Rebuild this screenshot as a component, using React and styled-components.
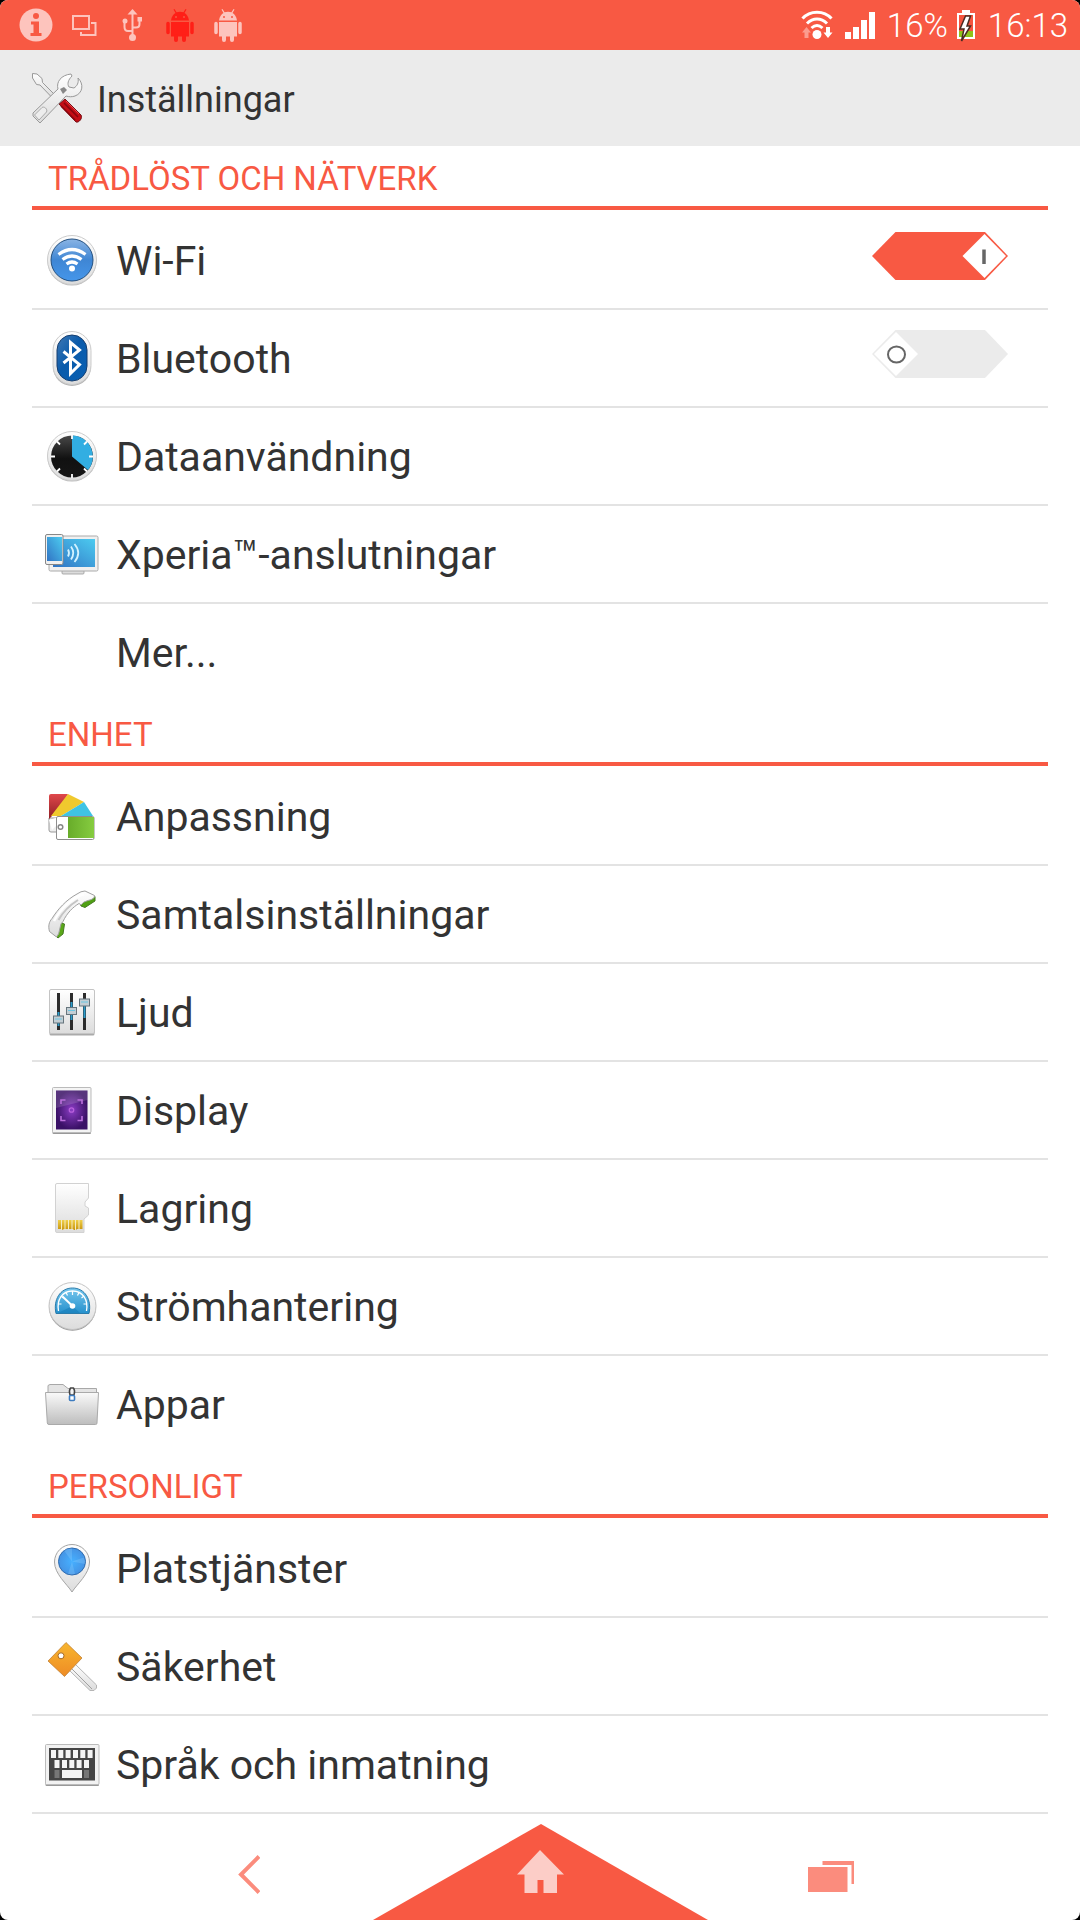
import React, { useState } from 'react';
import styled, { createGlobalStyle } from 'styled-components';

const accent = '#f85943';
const faded = '#fdc4bd';

const GlobalStyle = createGlobalStyle`
  * {
    box-sizing: border-box;
  }

  body {
    margin: 0;
    background: #000;
    color: #333;
    font-family: Roboto, 'Noto Sans', sans-serif;
  }
`;

/* Gradients shared by the row icons */
const Gradients = () => (
  <HiddenSvg aria-hidden="true">
    <defs>
      <linearGradient id="silver" x1="0" y1="0" x2="0" y2="1">
        <stop offset="0" stopColor="#fff" />
        <stop offset="1" stopColor="#dcdcdc" />
      </linearGradient>
      <linearGradient id="folder" x1="0" y1="0" x2="0" y2="1">
        <stop offset="0" stopColor="#fafafa" />
        <stop offset="1" stopColor="#bdbdbd" />
      </linearGradient>
      <linearGradient id="wifi" x1="0" y1="0" x2="0" y2="1">
        <stop offset="0" stopColor="#8ab4e4" />
        <stop offset="0.5" stopColor="#3f86d4" />
        <stop offset="1" stopColor="#4596ea" />
      </linearGradient>
      <linearGradient id="bluetooth" x1="0" y1="0" x2="1" y2="1">
        <stop offset="0" stopColor="#3f78b4" />
        <stop offset="0.45" stopColor="#0a5bab" />
        <stop offset="1" stopColor="#0961b4" />
      </linearGradient>
      <linearGradient id="screen" x1="1" y1="0" x2="0" y2="1">
        <stop offset="0" stopColor="#4ccbf0" />
        <stop offset="1" stopColor="#3174c4" />
      </linearGradient>
      <linearGradient id="dial" x1="0" y1="0" x2="0" y2="1">
        <stop offset="0" stopColor="#484848" />
        <stop offset="0.55" stopColor="#111" />
        <stop offset="1" stopColor="#161616" />
      </linearGradient>
      <linearGradient id="red" x1="0" y1="0" x2="0" y2="1">
        <stop offset="0" stopColor="#e0484b" />
        <stop offset="1" stopColor="#8f1e24" />
      </linearGradient>
      <linearGradient id="green" x1="0" y1="0" x2="1" y2="0">
        <stop offset="0" stopColor="#68ac2a" />
        <stop offset="1" stopColor="#86cc40" />
      </linearGradient>
      <radialGradient id="purple">
        <stop offset="0" stopColor="#8a3cc4" />
        <stop offset="1" stopColor="#3a1166" />
      </radialGradient>
      <linearGradient id="gold" x1="0" y1="0" x2="0" y2="1">
        <stop offset="0" stopColor="#f0d04a" />
        <stop offset="1" stopColor="#c8940c" />
      </linearGradient>
      <linearGradient id="gauge" x1="0" y1="0" x2="0" y2="1">
        <stop offset="0" stopColor="#78c8ee" />
        <stop offset="1" stopColor="#2590cc" />
      </linearGradient>
      <linearGradient id="key" x1="0" y1="0" x2="0" y2="1">
        <stop offset="0" stopColor="#f8b62e" />
        <stop offset="1" stopColor="#ee8b25" />
      </linearGradient>
      <radialGradient id="pin">
        <stop offset="0" stopColor="#46b0ff" />
        <stop offset="1" stopColor="#4593e4" />
      </radialGradient>
    </defs>
  </HiddenSvg>
);

const icons = {
  tools: (
    <g strokeLinejoin="round">
      <path d="M4.500 3.500L9 4L14 8.500L14.500 12.500L26 24L23.500 27L12 15L8.500 14.500L4.500 8Z" fill="url(#silver)" stroke="#999" />
      <path d="M31 34L37 29L53 45C55 48 51 53 48 52Z" fill="#c30d15" stroke="#76141a" />
      <path d="M36 33L50 47M33 36L47 50" stroke="#86070e" strokeWidth="1.500" />
      <path d="M38 31L51 44" stroke="#f0474b" />
      <path d="M5 43L30 19C28 12 33 5 43 4L44 6C40 10 39 14 41 17L46 18C49 16 51 13 50 8C56 14 55 23 47 26C44 27 41 27 38 26L12 53L5 46Z" fill="url(#silver)" stroke="#999" />
      <path d="M6.500 45L14 37.500C16 36 20 39 18.500 42L11 50Z" fill="#ededed" stroke="#aaa" />
      <path d="M32 19L36 17L39 20L35 24Z" fill="#888" />
    </g>
  ),
  wifi: (
    <g>
      <circle cx="28" cy="29" r="24.500" fill="#bbb" />
      <circle cx="28" cy="28" r="24.500" fill="url(#silver)" stroke="#ccc" />
      <circle cx="28" cy="28" r="21" fill="url(#wifi)" stroke="#24507f" />
      <path d="M14.500 22.500Q28 12.500 41.500 22.500M18.500 27.500Q28 20.500 37.500 27.500M22.500 32Q28 28 33.500 32" fill="none" stroke="#fff" strokeWidth="3.200" />
      <circle cx="28" cy="36.500" r="3" fill="#fff" />
    </g>
  ),
  bluetooth: (
    <g>
      <rect x="9" y="2" width="38" height="54" rx="19" fill="#b5b5b5" />
      <rect x="9" y="1.500" width="38" height="53" rx="19" fill="url(#silver)" stroke="#ccc" />
      <rect x="13" y="5" width="30" height="46" rx="15" fill="url(#bluetooth)" stroke="#173f70" />
      <path d="M19.500 21.500L35.500 34.500L26.500 43.500V12.500L35.500 20L19.500 33" fill="none" stroke="#fff" strokeWidth="3" />
    </g>
  ),
  data: (
    <g>
      <circle cx="28" cy="29" r="24.500" fill="#bbb" />
      <circle cx="28" cy="28" r="24.500" fill="url(#silver)" stroke="#ccc" />
      <circle cx="28" cy="28.500" r="21" fill="url(#dial)" />
      <path d="M28 28.500V7.500A21 21 0 0 1 44 42Z" fill="#32aee2" />
      <path d="M28 7V11M28 46V50M7 28.500H11M45 28.500H49M13 13.500L16 16.500M40 40.500L43 43.500M13 43.500L16 40.500M40 16.500L43 13.500" stroke="#fff" strokeWidth="1.800" />
    </g>
  ),
  xperia: (
    <g>
      <rect x="18" y="44" width="22" height="4" rx="1" fill="#ddd" stroke="#999" strokeWidth="0.800" />
      <rect x="5" y="10" width="49" height="35" rx="1.500" fill="#f0f0f0" stroke="#aaa" />
      <rect x="9" y="13" width="42" height="28" fill="url(#screen)" />
      <rect x="1.500" y="8.500" width="17.500" height="30" rx="1.500" fill="#f0f0f0" stroke="#888" />
      <rect x="3" y="11" width="15" height="24" fill="url(#screen)" />
      <path d="M24 23.500Q26 27 24 30.500M27 20.500Q31.500 27 27 33.500M30.500 18Q38 27 30.500 36" fill="none" stroke="#d2f2ff" strokeWidth="1.800" />
    </g>
  ),
  palette: (
    <g>
      <path d="M5 30V42Q5 44 7 44H13V30Z" fill="#eee" stroke="#999" />
      <path d="M5 31V8Q5 6 7 6H24L16 20Z" fill="url(#red)" />
      <path d="M24 6L40 14L17 28H7Z" fill="#f0c92e" />
      <path d="M40 14L49 28H17Z" fill="#3fc3e4" />
      <path d="M5 32L18 28V32L8 42Z" fill="#fff" />
      <rect x="12.500" y="28.500" width="37.500" height="23" rx="1.500" fill="#fff" stroke="#8e8e8e" />
      <rect x="24" y="29" width="26" height="21" fill="url(#green)" />
      <circle cx="16.500" cy="39" r="2.300" fill="#fff" stroke="#888" strokeWidth="1.500" />
    </g>
  ),
  phone: (
    <g strokeLinejoin="round">
      <path d="M36 17L51 10.500V15L41 21.500L37 20Z" fill="#4fa012" stroke="#467a23" />
      <path d="M16 36.500L20.500 38L19 48L14 52L12 50Z" fill="#5aa818" stroke="#467a23" />
      <path d="M41 5L50.500 9.500Q51 13 44 14.500Q39 15.500 37 19L35 17.500C29 21 23 27 19 35.500Q16.500 37 16 42Q15 49 12.500 51L5.500 45.500C4 40 5 36 8 32.500C14 23 22 14 33 8Q37 5 41 5Z" fill="url(#silver)" stroke="#a0a0a0" />
      <path d="M34 14C26 19 19 26 14.500 34" fill="none" stroke="#c4c4c4" strokeWidth="2" />
      <path d="M40 8C29 11 16 23 10 35" fill="none" stroke="#fff" strokeWidth="2.500" />
    </g>
  ),
  sound: (
    <g>
      <rect x="5.500" y="6" width="45" height="45.500" rx="1.500" fill="#aaa" />
      <rect x="5.500" y="5.500" width="45" height="44" rx="1.500" fill="url(#silver)" stroke="#c4c4c4" />
      <path d="M14.500 9V46M27.500 9V46M40.500 9V46" stroke="#2b2b2b" strokeWidth="3" />
      <path d="M14.500 28V42M27.500 18V36M40.500 22V34" stroke="#2c9ccb" strokeWidth="2" />
      <g fill="#c3ced4" stroke="#66757d">
        <rect x="9.500" y="32" width="10" height="7" />
        <rect x="22.500" y="23.500" width="10" height="7" />
        <rect x="35.500" y="15" width="10" height="7" />
      </g>
      <path d="M11 35H18M24 26.500H31M37 18H44" stroke="#6cc6e2" strokeWidth="1.200" />
    </g>
  ),
  display: (
    <g>
      <rect x="8.500" y="6" width="38.500" height="46" rx="1" fill="#999" />
      <rect x="8.500" y="5.500" width="38.500" height="45" rx="1" fill="#f4f4f4" stroke="#bbb" />
      <rect x="12" y="8.500" width="31.500" height="39" fill="url(#purple)" />
      <path d="M12 8.500H43.500V18L12 26Z" fill="#fff" opacity="0.150" />
      <path d="M17 22V18H21.500M33.500 18H38V22M38 34V38.500H33.500M21.500 38.500H17V34" fill="none" stroke="#bb6fdc" strokeWidth="1.600" />
      <circle cx="27.500" cy="28" r="2.200" fill="none" stroke="#b860dc" strokeWidth="1.300" />
    </g>
  ),
  storage: (
    <g>
      <path d="M13 3.500H44.500V18L41 22V26L44.500 28V35L40 39V52.500H13Q11.500 52.500 11.500 51V5Q11.500 3.500 13 3.500Z" fill="url(#silver)" stroke="#d2d2d2" />
      <path d="M14 40H38.500V49H33L32 50H30L29 49H20L18 50L17 49H14Z" fill="url(#gold)" />
      <path d="M17.500 40V50M21 40V50M24.500 40V50M28 40V50M31.500 40V50M35 40V50" stroke="#f5ecc4" />
    </g>
  ),
  power: (
    <g>
      <circle cx="28.500" cy="29.200" r="23.500" fill="#999" />
      <circle cx="28.500" cy="28" r="23.500" fill="url(#silver)" stroke="#c4c4c4" />
      <path d="M12 35.500C9 22 16 10 28.500 10S48 22 45 35.500Z" fill="url(#gauge)" stroke="#2b7cab" />
      <path d="M28.500 28L14 35H36Z" fill="#1479b5" opacity="0.500" />
      <path d="M14.500 33C12.500 22 18 13 28.500 13S44.500 22 42.500 33" fill="none" stroke="#fff" strokeWidth="1.300" />
      <path d="M14 26H17.500M17 18L19.500 20M28.500 13V17M40 18L37.500 20M43 26H39.500M22 14.500L23.500 17.500M35 14.500L33.500 17.500" stroke="#fff" strokeWidth="1.200" />
      <path d="M28.500 28L18.500 18.500" stroke="#fff" strokeWidth="2" />
      <circle cx="28.500" cy="28" r="2.800" fill="#fff" />
    </g>
  ),
  apps: (
    <g strokeLinejoin="round">
      <path d="M4 20V9.500L6 8.500H19L24 12.500H52.500V20Z" fill="#e4e4e4" stroke="#a8a8a8" />
      <path d="M1.500 16.500H54.500L53 47Q53 48.500 51.500 48.500H5Q3.500 48.500 3.300 47Z" fill="url(#folder)" stroke="#aaa" />
      <path d="M26.500 12Q24.500 15 26 19H30Q31.500 15 29.500 12Z" fill="#f4f4f4" stroke="#444" strokeWidth="1.400" />
      <rect x="25.500" y="19.500" width="5" height="5" rx="1" fill="#fff" stroke="#3d7cc0" strokeWidth="1.600" />
    </g>
  ),
  location: (
    <g>
      <path d="M28 52C23 44 10.500 34 10.500 22A17.500 17.500 0 0 1 45.500 22C45.500 34 33 44 28 52Z" fill="url(#silver)" stroke="#a5a5a5" />
      <circle cx="28" cy="21.500" r="13.500" fill="url(#pin)" stroke="#2e6aad" />
      <path d="M28 21.500L20 10.500A13 13 0 0 1 28 8.500ZM28 21.500L40 17.500A13 13 0 0 1 41 24ZM28 21.500L24 34A13 13 0 0 0 31 34Z" fill="#8fd0ff" opacity="0.300" />
    </g>
  ),
  security: (
    <g strokeLinejoin="round">
      <path d="M25 32L31 26L52.500 47V50L50 52.500H46Z" fill="url(#silver)" stroke="#b5b5b5" />
      <path d="M28 31L48 51" stroke="#999" strokeWidth="0.900" />
      <path d="M22 4.500L38 20L20.500 38.500L4 23Z" fill="url(#key)" stroke="#b9772b" strokeWidth="0.700" />
      <circle cx="17" cy="17.800" r="3" fill="#fff" stroke="#a66a24" />
    </g>
  ),
  language: (
    <g>
      <rect x="1.500" y="9" width="53.500" height="41" rx="1" fill="#999" />
      <rect x="1.500" y="8.500" width="53.500" height="40" rx="1" fill="#f2f2f2" stroke="#bbb" />
      <rect x="5" y="12" width="46" height="32.500" fill="#454545" />
      <path d="M7 14H12V22H7ZM14.300 14H19.300V22H14.300ZM21.600 14H26.600V22H21.600ZM29 14H34V22H29ZM36.300 14H41.300V22H36.300ZM43.600 14H48.600V22H43.600ZM10.500 24H15.500V32H10.500ZM18 24H23V32H18ZM25.300 24H30.300V32H25.300ZM32.600 24H37.600V32H32.600ZM40 24H45V32H40ZM18 34H38V42H18Z" fill="#f4f4f4" />
      <path d="M10.500 34H15.500V42H10.500ZM40 34H45V42H40Z" fill="#777" />
    </g>
  )
};

const RowIcon = ({ name }) => (
  <IconBox viewBox="0 0 56 56" aria-hidden="true">
    {icons[name]}
  </IconBox>
);

const Robot = ({ color }) => (
  <StatusIcon viewBox="0 0 48 50">
    <path
      d="M15 20.500C15.500 16.500 17.500 14 19.500 13L17.500 9.500L18.500 9L20.500 12.300Q24 11 27.500 12.300L29.500 9L30.500 9.500L28.500 13C30.500 14 32.500 16.500 33 20.500ZM15 22H33V36.500H15Z"
      fill={color}
    />
    <path d="M12 23.500V32.500M36 23.500V32.500" stroke={color} strokeWidth="3.500" strokeLinecap="round" />
    <path d="M20 36V40M28 36V40" stroke={color} strokeWidth="4" strokeLinecap="round" />
    <circle cx="20" cy="17" r="1" fill={accent} />
    <circle cx="28" cy="17" r="1" fill={accent} />
  </StatusIcon>
);

const Switch = ({ label, defaultChecked }) => {
  const [on, setOn] = useState(defaultChecked);

  return (
    <SwitchLabel>
      <SwitchInput type="checkbox" role="switch" aria-label={label} checked={on} onChange={() => setOn(!on)} />
      <svg width="136" height="48" viewBox="0 0 136 48" aria-hidden="true">
        <path d="M0 24L23.500 0H113L136 24L113 48H23.500Z" fill={on ? accent : '#ebebeb'} />
        {on ? (
          <g>
            <path d="M90.500 24L112.500 2L134 24L112.500 46Z" fill="#fff" />
            <path d="M112 17.500V32" stroke="#666" strokeWidth="3.500" />
          </g>
        ) : (
          <g>
            <path d="M2 24L24 2L46 24L24 46Z" fill="#fff" />
            <ellipse cx="24.500" cy="24.500" rx="8.500" ry="8" fill="none" stroke="#666" strokeWidth="2" />
          </g>
        )}
      </svg>
    </SwitchLabel>
  );
};

const sections = [
  {
    title: 'TRÅDLÖST OCH NÄTVERK',
    items: [
      { icon: 'wifi', text: 'Wi-Fi', toggle: true, on: true },
      { icon: 'bluetooth', text: 'Bluetooth', toggle: true, on: false },
      { icon: 'data', text: 'Dataanvändning' },
      { icon: 'xperia', text: 'Xperia™-anslutningar' },
      { icon: null, text: 'Mer...' }
    ]
  },
  {
    title: 'ENHET',
    items: [
      { icon: 'palette', text: 'Anpassning' },
      { icon: 'phone', text: 'Samtalsinställningar' },
      { icon: 'sound', text: 'Ljud' },
      { icon: 'display', text: 'Display' },
      { icon: 'storage', text: 'Lagring' },
      { icon: 'power', text: 'Strömhantering' },
      { icon: 'apps', text: 'Appar' }
    ]
  },
  {
    title: 'PERSONLIGT',
    more: true,
    items: [
      { icon: 'location', text: 'Platstjänster' },
      { icon: 'security', text: 'Säkerhet' },
      { icon: 'language', text: 'Språk och inmatning' }
    ]
  }
];

const StatusBar = () => (
  <Status>
    <StatusGroup>
      <StatusIcon viewBox="0 0 48 50">
        <circle cx="24" cy="25" r="16.500" fill={faded} />
        <circle cx="24" cy="16" r="3" fill={accent} />
        <path d="M19 21.500H27V33H29.500V36H18.500V33H21.500V24.500H19Z" fill={accent} />
      </StatusIcon>
      <StatusIcon viewBox="0 0 48 50">
        <path d="M13 16H29V29H13ZM31 23H35.500V35H21V32" fill="none" stroke={faded} strokeWidth="2" />
      </StatusIcon>
      <StatusIcon viewBox="0 0 48 50">
        <path d="M24.500 13V37M16.500 22V27Q16.500 31 20 31H24.500M31.500 20V24Q31.500 27.500 28 27.500H24.500" fill="none" stroke={faded} strokeWidth="2" />
        <path d="M24.500 9L29.500 14.500H19.500Z" fill={faded} />
        <circle cx="24.500" cy="37.500" r="3.500" fill={faded} />
        <circle cx="17" cy="21" r="2.500" fill={faded} />
        <rect x="29.500" y="17" width="4.500" height="4.500" fill={faded} />
      </StatusIcon>
      <Robot color="#ff1f17" />
      <Robot color={faded} />
    </StatusGroup>
    <StatusGroup>
      <svg width="32" height="50" viewBox="0 0 32 50">
        <path d="M1.500 18.500C9 10 23 10 30.500 18.500M6 23.500C12 17.500 20 17.500 26 23.500M10.500 28Q16 23 21.500 28" fill="none" stroke="#fff" strokeWidth="3" />
        <circle cx="16" cy="34.500" r="4.500" fill="#fff" />
        <path d="M5.500 27L10 32.500H7.500V38H3.500V32.500H1Z" fill="#fb9c8f" />
        <path d="M27 38L31.500 32.500H29V27H25V32.500H22.500Z" fill="#fff" />
      </svg>
      <Signal width="30" height="50" viewBox="0 0 30 50">
        <path d="M0 32H6V39H0ZM8 27H14V39H8ZM16 20H22V39H16ZM24 12H30V39H24Z" fill="#fff" />
      </Signal>
      <StatusText>16%</StatusText>
      <svg width="20" height="50" viewBox="0 0 20 50">
        <path d="M6 10H14V13H19V39H1V13H6Z" fill="#fff" />
        <path d="M3 15H17V37H3Z" fill="#f4553f" />
        <path d="M3 31H17V37H3Z" fill="#8fc31a" />
        <path d="M9.500 16L4 29H8L5.500 41L14.500 26H11L14.500 16Z" fill="#fff" stroke="#4a2b22" strokeWidth="1.500" />
      </svg>
      <Clock>16:13</Clock>
    </StatusGroup>
  </Status>
);

export default function App() {
  return (
    <Page>
      <GlobalStyle />
      <Gradients />
      <StatusBar />
      <Header>
        <RowIcon name="tools" />
        <Heading>Inställningar</Heading>
      </Header>
      <Main>
        {sections.map(section => (
          <section key={section.title}>
            <SectionTitle>{section.title}</SectionTitle>
            <List>
              {section.items.map(item => (
                <Row key={item.text} $more={section.more}>
                  <RowLink href="#">
                    <RowIcon name={item.icon} />
                    <RowText>{item.text}</RowText>
                  </RowLink>
                  {item.toggle && <Switch label={item.text} defaultChecked={item.on} />}
                </Row>
              ))}
            </List>
          </section>
        ))}
      </Main>
      <NavBar>
        <NavButton aria-label="Tillbaka">
          <svg width="24" height="96" viewBox="0 0 24 96">
            <path d="M23 32.500L5 50.500L23 68.500" fill="none" stroke="#fb8c7d" strokeWidth="4" />
          </svg>
        </NavButton>
        <NavButton aria-label="Hem">
          <svg width="336" height="96" viewBox="0 0 336 96">
            <path d="M1 96L169 0L336 96Z" fill={accent} />
            <path d="M168 26L192 50.500H185V69H171.500V56H165.500V69H152.500V50.500H145Z" fill="#fccdc7" />
          </svg>
        </NavButton>
        <NavButton aria-label="Senaste appar">
          <svg width="48" height="96" viewBox="0 0 48 96">
            <path d="M0 43H39.500V68H0Z" fill="#fb8c7d" />
            <path d="M14.500 37H46V60H43.500V41H14.500Z" fill="#fb8c7d" />
          </svg>
        </NavButton>
      </NavBar>
    </Page>
  );
}

const Page = styled.div`
  display: flex;
  flex-direction: column;
  min-height: 100vh;
  background: #fff;
  border-radius: 8px;
`;

const HiddenSvg = styled.svg`
  position: absolute;
  width: 0;
  height: 0;
`;

const Status = styled.div`
  display: flex;
  justify-content: space-between;
  height: 50px;
  padding: 0 12px;
  background: ${accent};
  border-radius: 8px 8px 0 0;
  color: #fff;
`;

const StatusGroup = styled.div`
  display: flex;
  align-items: center;
`;

const StatusIcon = styled.svg`
  width: 48px;
  height: 50px;
`;

const Signal = styled.svg`
  margin: 0 12px;
`;

const StatusText = styled.span`
  margin-right: 8px;
  padding-top: 2px;
  font-size: 33px;
  font-weight: 300;
  line-height: 48px;
`;

const Clock = styled(StatusText)`
  margin: 0 0 0 12px;
`;

const Header = styled.header`
  display: flex;
  align-items: center;
  gap: 12px;
  height: 96px;
  padding: 0 28px;
  background: #ebebeb;
`;

const Heading = styled.h1`
  margin: 0;
  padding: 4px 0 0 1px;
  font-size: 36px;
  font-weight: 400;
  line-height: 48px;
`;

const IconBox = styled.svg`
  flex: none;
  width: 56px;
  height: 56px;
`;

const Main = styled.main`
  padding: 0 32px;
`;

const SectionTitle = styled.h2`
  height: 64px;
  margin: 0 0 2px;
  padding: 8px 16px 0;
  border-bottom: 4px solid ${accent};
  color: ${accent};
  font-size: 33px;
  font-weight: 400;
  line-height: 50px;
`;

const List = styled.ul`
  margin: 0;
  padding: 0;
  list-style: none;
`;

const Row = styled.li`
  display: flex;
  align-items: center;
  height: 98px;
  padding: 0 40px 0 12px;
  border-bottom: 2px solid #e3e3e3;

  &:last-child {
    border-color: ${props => (props.$more ? '#e3e3e3' : 'transparent')};
  }
`;

const RowLink = styled.a`
  display: flex;
  flex: 1;
  align-items: center;
  gap: 16px;
  height: 96px;
  color: inherit;
  font-size: 41px;
  text-decoration: none;
`;

const RowText = styled.span`
  padding-top: 2px;
  line-height: 48px;
`;

const SwitchLabel = styled.label`
  position: relative;
  height: 56px;
  cursor: pointer;
`;

const SwitchInput = styled.input`
  position: absolute;
  width: 136px;
  height: 48px;
  margin: 0;
  opacity: 0;
  cursor: pointer;
`;

const NavBar = styled.nav`
  position: sticky;
  bottom: 0;
  display: grid;
  grid-template-columns: repeat(3, 27%);
  justify-content: center;
  height: 96px;
  margin-top: auto;
`;

const NavButton = styled.button`
  display: flex;
  justify-self: center;
  padding: 0;
  border: 0;
  background: none;
  cursor: pointer;
`;
